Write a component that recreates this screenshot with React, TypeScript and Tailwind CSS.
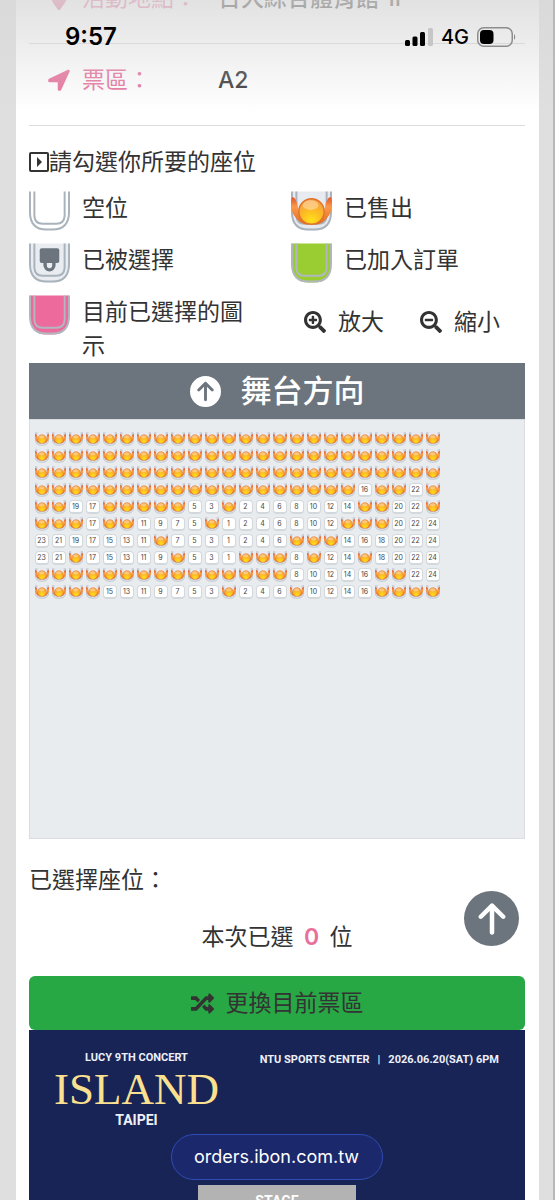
import { FaRandom, FaSearchMinus, FaSearchPlus } from "react-icons/fa"
import { FaArrowUp, FaCircleArrowUp, FaLocationDot } from "react-icons/fa6"

type SeatKind = "free" | "sold" | "taken" | "ordered" | "current"

// Seat numbers run from the left aisle inwards, then outwards to the right
const SEAT_NUMBERS = [23, 21, 19, 17, 15, 13, 11, 9, 7, 5, 3, 1, 2, 4, 6, 8, 10, 12, 14, 16, 18, 20, 22, 24]

// Free seats of each row, every other seat is sold
const FREE_SEATS: number[][] = [
  [],
  [],
  [],
  [16, 22],
  [19, 17, 5, 3, 2, 4, 6, 8, 10, 12, 14, 20, 22],
  [17, 11, 9, 7, 5, 1, 2, 4, 6, 8, 10, 12, 20, 22, 24],
  [23, 21, 19, 17, 15, 13, 11, 7, 5, 3, 1, 2, 4, 6, 14, 16, 18, 20, 22, 24],
  [23, 21, 17, 15, 13, 11, 9, 5, 3, 1, 8, 12, 14, 18, 20, 22, 24],
  [8, 10, 12, 14, 16, 22, 24],
  [15, 13, 11, 9, 7, 5, 3, 2, 4, 6, 10, 12, 14, 16],
]

const LEGEND: { kind: SeatKind; label: string }[] = [
  { kind: "free", label: "空位" },
  { kind: "sold", label: "已售出" },
  { kind: "taken", label: "已被選擇" },
  { kind: "ordered", label: "已加入訂單" },
  { kind: "current", label: "目前已選擇的圖示" },
]

const SEAT_FILL: Record<SeatKind, string> = {
  free: "#ffffff",
  sold: "#e6e9ee",
  taken: "#e9ecf1",
  ordered: "#9acd32",
  current: "#ec6a9c",
}

// Gradients shared by every sold seat
function SeatDefs() {
  return (
    <svg className="absolute size-0" aria-hidden="true">
      <defs>
        <radialGradient id="ball" cx="0.5" cy="0.85" r="0.85">
          <stop offset="0" stopColor="#ffe11a" />
          <stop offset="0.5" stopColor="#fdb924" />
          <stop offset="1" stopColor="#f39a45" />
        </radialGradient>
        <linearGradient id="wing" x1="0" y1="0" x2="0" y2="1">
          <stop offset="0" stopColor="#e0552a" />
          <stop offset="0.35" stopColor="#fb9a48" />
          <stop offset="1" stopColor="#e2681f" />
        </linearGradient>
      </defs>
    </svg>
  )
}

function SeatIcon({ kind, className }: { kind: SeatKind; className: string }) {
  const line = kind === "current" || kind === "ordered" ? "#b1b6bf" : "#a9b3bc"
  return (
    <svg className={className} viewBox="0 0 42 41" aria-hidden="true">
      <path d="M1 0V21Q1 40 18 40H24Q41 40 41 21V0Z" fill={SEAT_FILL[kind]} />
      <path d="M1 0V21Q1 39 18 39H24Q41 39 41 21V0" fill="none" stroke={line} strokeWidth="2" />
      <path d="M5.500 0V25Q6 33 14 33H28Q36 33 36.500 25V0" fill="none" stroke={line} strokeWidth="2" />
      {kind === "taken" && (
        <>
          <rect x="11" y="5" width="20" height="15" rx="2" fill="#6c757d" />
          <path d="M16.500 18V22a4.500 5 0 0 0 9 0V18" fill="none" stroke="#6c757d" strokeWidth="3.500" />
        </>
      )}
      {kind === "sold" && (
        <>
          <path d="M8 2H34V24Q34 32 26 32H16Q8 32 8 24Z" fill="#e8ebf0" />
          <path d="M1 6C-2 14 0 24 9 31C12 33 15 34 18 34C11 29 8 24 7 16C6 10 4 5 1 6Z" fill="url(#wing)" />
          <path d="M41 6C44 14 42 24 33 31C30 33 27 34 24 34C31 29 34 24 35 16C36 10 38 5 41 6Z" fill="url(#wing)" />
          <circle cx="21" cy="20.500" r="13" fill="url(#ball)" stroke="#e0742a" strokeWidth="1.500" />
          <ellipse cx="20" cy="14" rx="8" ry="5" fill="#ffdcae" opacity="0.600" />
        </>
      )}
    </svg>
  )
}

function Seat({ number, free }: { number: number; free: boolean }) {
  if (!free) {
    return (
      <button className="flex size-[17px] items-center justify-center" aria-label={`${number}`} disabled>
        <SeatIcon kind="sold" className="size-[14px]" />
      </button>
    )
  }
  return (
    <button className="flex size-[17px] items-center justify-center">
      <span className="flex size-[14px] items-center justify-center rounded-[4px] border border-b-2 border-[#d3d8dd] bg-white text-[7px] leading-none text-[#444]">
        {number}
      </span>
    </button>
  )
}

function LocationArrow() {
  return (
    <svg className="size-6" viewBox="0 0 24 24" aria-hidden="true">
      <path d="M2.500 12L21.500 3L13 21.500H12V13H2.500Z" fill="currentColor" stroke="currentColor" strokeWidth="2.500" strokeLinejoin="round" />
    </svg>
  )
}

function StatusBar() {
  return (
    <div className="absolute inset-x-0 top-0 z-20 flex h-28 items-start justify-between bg-linear-to-b from-[#d8d8d8]/75 to-transparent pt-[22px] pr-9 pl-[65px] text-black">
      <span className="text-2xl leading-[30px] font-semibold">9:57</span>
      <div className="flex h-[30px] items-center gap-2">
        <svg className="h-[18px] w-7" viewBox="0 0 28 18" aria-hidden="true">
          <rect x="0" y="12" width="5" height="6" rx="1.500" />
          <rect x="7.500" y="8.500" width="5" height="9.500" rx="1.500" />
          <rect x="15" y="4" width="5" height="14" rx="1.500" />
          <rect x="23" y="0" width="5" height="18" rx="1.500" fill="#c6c6c6" />
        </svg>
        <span className="text-xl font-medium">4G</span>
        <svg className="h-5 w-10" viewBox="0 0 40 20" aria-hidden="true">
          <rect x="0.750" y="0.750" width="34.500" height="18.500" rx="6" fill="none" stroke="#8d8d8d" strokeWidth="1.500" />
          <rect x="3" y="3" width="13.500" height="14" rx="4" />
          <path d="M37 7Q39.500 10 37 13Z" fill="#8d8d8d" />
        </svg>
      </div>
    </div>
  )
}

function InfoRow({ icon, label, value }: { icon: React.ReactNode; label: string; value: string }) {
  return (
    <div className="flex h-[82px] items-center border-b border-[#dcdcdc] pb-[9px] pl-[18px]">
      <dt className="flex w-[171px] items-center gap-[11px] text-[#e8709b]">
        {icon}
        {label}
      </dt>
      <dd className="font-medium">{value}</dd>
    </div>
  )
}

export default function App() {
  return (
    <div className="relative h-screen overflow-hidden border-r-2 border-[#b8b8b8] bg-[#dfdfe0] pr-[14px] pl-4 font-[Inter,'Noto_Sans_CJK_TC',sans-serif] text-[23px] leading-[34px] text-[#333]">
      <SeatDefs />
      <StatusBar />

      <main className="min-h-full bg-white pr-[14px] pl-[13px]">
        <dl className="-mt-[38px] inline-block w-full align-top">
          <InfoRow icon={<FaLocationDot className="size-6" />} label="活動地點：" value="台大綜合體育館 1F" />
          <InfoRow icon={<LocationArrow />} label="票區：" value="A2" />
        </dl>

        <h2 className="mt-[19px] flex items-center">
          <svg className="size-5" viewBox="0 0 20 20" aria-hidden="true">
            <rect x="1" y="1" width="18" height="18" rx="1" fill="none" stroke="#333" strokeWidth="2" />
            <path d="M8 5L13 10L8 15Z" fill="#333" />
          </svg>
          請勾選你所要的座位
        </h2>

        {/* Legend and zoom controls */}
        <div className="mt-3 grid grid-cols-2 gap-x-7 gap-y-[11px]">
          {LEGEND.map(({ kind, label }) => (
            <div key={kind} className="flex items-start gap-3">
              <SeatIcon kind={kind} className="h-[41px] w-[41px] shrink-0" />
              <span>{label}</span>
            </div>
          ))}
          <div className="flex items-start gap-9 pt-[10px] pl-[13px]">
            <button className="flex items-center gap-3">
              <FaSearchPlus className="size-[22px]" />
              放大
            </button>
            <button className="flex items-center gap-3">
              <FaSearchMinus className="size-[22px]" />
              縮小
            </button>
          </div>
        </div>

        {/* Seat map */}
        <section>
          <h3 className="flex h-14 items-center justify-center gap-5 bg-[#6c757d] text-[31px] font-medium text-white">
            <FaCircleArrowUp />
            舞台方向
          </h3>
          <div className="h-[420px] overflow-auto border border-[#d9dde1] bg-[#e9ecef] px-[3px] pt-[10px]">
            {FREE_SEATS.map((free, row) => (
              <div key={row} className="flex">
                {SEAT_NUMBERS.map(n => (
                  <Seat key={n} number={n} free={free.includes(n)} />
                ))}
              </div>
            ))}
          </div>
        </section>

        <p className="mt-6">已選擇座位：</p>
        <p className="mt-[23px] text-center">
          本次已選 <b className="mx-1 font-semibold text-[#e8709b]">0</b> 位
        </p>

        <button className="mt-[22px] flex h-[54px] w-full items-center justify-center gap-3 rounded-md bg-[#28a745]">
          <FaRandom />
          更換目前票區
        </button>

        {/* Event banner */}
        <section className="h-[300px] bg-[#182456] font-[Roboto,sans-serif] text-[#eef0f8]">
          <div className="flex items-start justify-between pt-5 pr-[26px] pl-[25px]">
            <div className="flex flex-col items-center font-bold">
              <span className="text-[11px] leading-4">LUCY 9TH CONCERT</span>
              <span className="font-['Liberation_Serif',serif] text-[45px] leading-[46px] font-normal text-[#fbe08f]">ISLAND</span>
              <span className="text-sm leading-4">TAIPEI</span>
            </div>
            <div className="flex gap-2 text-[11px] leading-5 font-bold">
              <span>NTU SPORTS CENTER</span>
              <span>|</span>
              <span>2026.06.20(SAT) 6PM</span>
            </div>
          </div>
          <div className="mx-auto mt-[57px] h-24 w-[158px] bg-[#b3b3b3] pt-2 text-center text-sm leading-4 font-bold text-white">
            STAGE
          </div>
        </section>
      </main>

      <button
        className="absolute right-[34px] bottom-[254px] flex size-[55px] items-center justify-center rounded-full bg-[#6c757d] text-white"
        aria-label="Top"
      >
        <FaArrowUp className="size-9" />
      </button>

      <a
        href="#"
        className="absolute bottom-5 left-1/2 flex h-[46px] w-[212px] -translate-x-1/2 items-center justify-center rounded-full border border-[#2f4bb5] bg-[#1b286b] text-lg text-white"
      >
        orders.ibon.com.tw
      </a>
    </div>
  )
}
